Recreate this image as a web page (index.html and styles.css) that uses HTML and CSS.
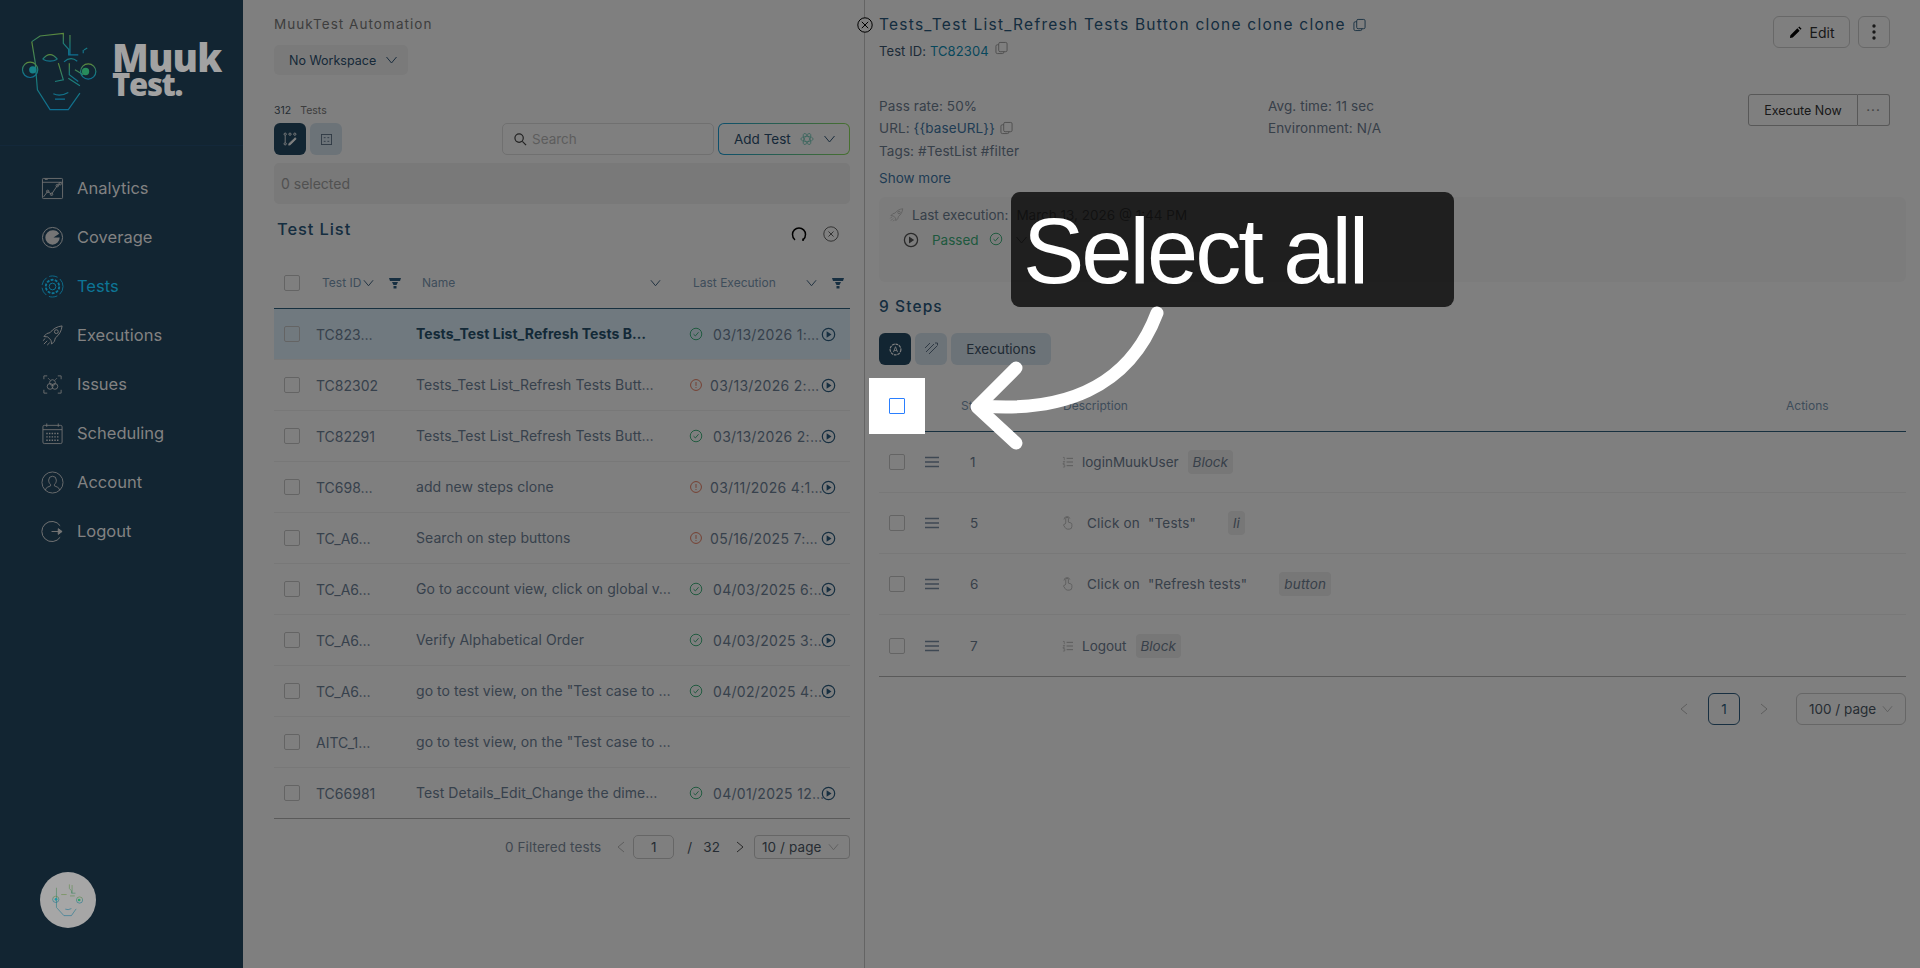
FILE: index.html
```html
<!DOCTYPE html>
<html lang="en">
<head>
<meta charset="utf-8">
<title>MuukTest</title>
<link rel="stylesheet" href="styles.css">
</head>
<body>
<svg class="defs" width="0" height="0">
  <defs>
    <linearGradient id="faceGrad" x1="0" y1="0" x2="0" y2="1">
      <stop offset="0" stop-color="#5f8a3a"/><stop offset=".5" stop-color="#1c7f7a"/><stop offset="1" stop-color="#0e6f92"/>
    </linearGradient>
    <symbol id="i-check" viewBox="0 0 16 16"><circle cx="8" cy="8" r="6.6" fill="none" stroke="currentColor" stroke-width="1.1"/><path d="M5.2 8.2 7.3 10.2 10.9 6" fill="none" stroke="currentColor" stroke-width="1.1"/></symbol>
    <symbol id="i-warn" viewBox="0 0 16 16"><circle cx="8" cy="8" r="6.2" fill="none" stroke="currentColor" stroke-width="1.1"/><path d="M8 4.6V9M8 10.4v1.1" fill="none" stroke="currentColor" stroke-width="1.1"/></symbol>
    <symbol id="i-play" viewBox="0 0 16 16"><circle cx="8" cy="8" r="6.6" fill="none" stroke="currentColor" stroke-width="1.3"/><path d="M6 4.6 11.2 8 6 11.4Z" fill="currentColor"/></symbol>
    <symbol id="i-chev" viewBox="0 0 12 8"><path d="M1 1 6 7 11 1" fill="none" stroke="currentColor" stroke-width="1"/></symbol>
    <symbol id="i-funnel" viewBox="0 0 12 12"><path d="M0 1H12L11 4H1ZM3 5H9L7.5 8H4.500ZM4.500 9H7.500V11.500H4.500Z" fill="currentColor"/></symbol>
    <symbol id="i-copy" viewBox="0 0 14 14"><rect x="4" y="1" width="9" height="10" rx="1.500" fill="none" stroke="currentColor"/><path d="M4 3.500H2.500A1.500 1.500 0 0 0 1 5V11.500A1.500 1.500 0 0 0 2.500 13H8A1.500 1.500 0 0 0 9.500 11.500V11" fill="none" stroke="currentColor"/></symbol>
    <symbol id="i-handle" viewBox="0 0 14 12"><path d="M0 1.500H14M0 6H14M0 10.500H14" stroke="currentColor" stroke-width="1.300"/></symbol>
    <symbol id="i-list" viewBox="0 0 12 12"><path d="M5 2H12M5 6H12M5 10H12" stroke="currentColor"/><path d="M1 1H2.500V4M1 5.500H3L1 8H3M1 9H3V11.500H1" fill="none" stroke="currentColor" stroke-width=".7"/></symbol>
    <symbol id="i-hand" viewBox="0 0 12 16"><path d="M4 8V3a1.500 1.500 0 0 1 3 0V7l3 1a1.500 1.500 0 0 1 1 1.500V12a3 3 0 0 1-3 3H6a3 3 0 0 1-2.500-1.500L1.500 10.500A1 1 0 0 1 3 9.500ZM2 4a3.500 3.500 0 0 1 6.800-1" fill="none" stroke="currentColor" stroke-width=".9"/></symbol>
    <symbol id="i-rocket" viewBox="0 0 24 24"><path d="M22 2C17 2.500 12.500 5 9.500 9L6 10 3 13 7 13.500 10.500 17 11 21 14 18 15 14.500C19 11.500 21.500 7 22 2ZM6.500 17.500 3 21M9 19.500 6.500 22M4.500 15 2 17.500" fill="none" stroke="currentColor"/><circle cx="16" cy="8" r="2" fill="none" stroke="currentColor"/></symbol>
  </defs>
</svg>

<div class="app">
  <aside class="sidebar">
    <div class="brand">
      <svg class="face" viewBox="60 90 240 250">
        <g fill="none" stroke="url(#faceGrad)" stroke-width="3.500">
          <path d="M95 125 120 108 190 100V130L206 148V165H235M210 105V165M252 150 262 144M250 150V160"/>
          <path d="M95 125 105 185 112 270 150 330H205L240 280"/>
          <path d="M128 178Q150 150 172 178M128 178Q150 190 172 178M192 186Q212 168 232 184"/>
          <path d="M225 210 250 225M205 235 240 258M175 190 190 240 165 245M160 282Q180 292 205 278M165 298H195"/>
          <circle cx="90" cy="210" r="23"/><circle cx="265" cy="215" r="23"/>
          <path d="M208 190V225L235 245"/>
        </g>
        <circle cx="98" cy="210" r="11" fill="#17828a"/><circle cx="257" cy="215" r="11" fill="#278c5c"/>
      </svg>
      <div class="wordmark"><span class="w-muuk">Muuk</span><span class="w-test">Test.</span></div>
    </div>
    <nav class="nav">
      <a class="nav-item"><svg class="nav-ico" viewBox="0 0 24 24" fill="none" stroke="currentColor" stroke-width=".9"><rect x="1.500" y="1.500" width="21" height="21" rx="1"/><path d="M1.500 5.500H22.500M4 2.500H7"/><path d="M2.500 21 7 15 11 18 17 9 20 7"/><circle cx="7" cy="15" r="1.300"/><circle cx="11" cy="18" r="1.300"/><circle cx="17" cy="9" r="1.300"/><circle cx="20" cy="7" r="1.300"/></svg><span>Analytics</span></a>
      <a class="nav-item"><svg class="nav-ico" viewBox="0 0 24 24"><circle cx="12" cy="12" r="10.500" fill="none" stroke="currentColor"/><path d="M12 4.500A7.500 7.500 0 1 0 19.500 12H13L19 8A7.500 7.500 0 0 0 12 4.500Z" fill="currentColor"/></svg><span>Coverage</span></a>
      <a class="nav-item is-active"><svg class="nav-ico" viewBox="0 0 24 24" fill="none" stroke="currentColor"><circle cx="12" cy="12" r="3.500"/><circle cx="12" cy="12" r="7" stroke-width="2" stroke-dasharray="3 1.400"/><circle cx="12" cy="12" r="11" stroke-width=".9" stroke-dasharray="9 3"/></svg><span>Tests</span></a>
      <a class="nav-item"><svg class="nav-ico" viewBox="0 0 24 24"><use href="#i-rocket"/></svg><span>Executions</span></a>
      <a class="nav-item"><svg class="nav-ico" viewBox="0 0 24 24" fill="none" stroke="currentColor" stroke-width=".9"><path d="M3 6.500V3H6.500M17.500 3H21V6.500M3 17.500V21H6.500M17.500 21H21V17.500"/><circle cx="9.500" cy="14" r="3"/><circle cx="14.500" cy="14" r="3"/><circle cx="12" cy="10" r="3"/><path d="M9 7 7.500 5.500M15 7 16.500 5.500"/></svg><span>Issues</span></a>
      <a class="nav-item"><svg class="nav-ico" viewBox="0 0 24 24" fill="none" stroke="currentColor" stroke-width=".9"><rect x="2" y="3.500" width="20" height="19" rx="1.500"/><path d="M2 8H22M6 1.500V5M18 1.500V5"/><path d="M5.500 12H18.500M5.500 15.500H18.500M5.500 19H18.500" stroke-width="1.500" stroke-dasharray="1.500 1.300"/></svg><span>Scheduling</span></a>
      <a class="nav-item"><svg class="nav-ico" viewBox="0 0 24 24" fill="none" stroke="currentColor" stroke-width=".9"><circle cx="12" cy="12" r="11"/><path d="M4.500 20C5 17 8 16.500 10 15.500V14C8.500 13 8 11 8 9.500A4 4 0 0 1 16 9.500C16 11 15.500 13 14 14V15.500C16 16.500 19 17 19.500 20"/></svg><span>Account</span></a>
      <a class="nav-item"><svg class="nav-ico" viewBox="0 0 24 24" fill="none" stroke="currentColor"><path d="M20 6A10.500 10.500 0 1 0 20 18"/><path d="M11 12H22"/><path d="M18 9 22 12 18 15Z" fill="currentColor"/></svg><span>Logout</span></a>
    </nav>
    <div class="avatar">
      <svg viewBox="60 90 240 250" class="avatar-face">
        <g fill="none" stroke="url(#faceGrad)" stroke-width="4">
          <path d="M95 125V270L150 330H205L240 280M190 100V130L206 148V165H235M210 105V165"/>
          <path d="M130 175H170M195 185H230M160 282Q180 292 205 278"/>
          <circle cx="90" cy="210" r="23"/><circle cx="265" cy="215" r="23"/>
        </g>
        <circle cx="92" cy="210" r="10" fill="#1b9aa6"/><circle cx="262" cy="215" r="10" fill="#2da46a"/>
      </svg>
    </div>
  </aside>

  <section class="list-panel">
    <div class="org">MuukTest Automation</div>
    <div class="workspace">No Workspace <svg class="chev chev-lg"><use href="#i-chev"/></svg></div>
    <div class="count"><span>312</span><span>Tests</span></div>
    <div class="tools">
      <button class="square is-dark"><svg viewBox="0 0 16 16" fill="none" stroke="currentColor" width="14" height="14"><circle cx="2.500" cy="2.500" r="1.300"/><circle cx="2.500" cy="13.500" r="1.300"/><circle cx="8" cy="2.500" r="1.300"/><circle cx="13.500" cy="2.500" r="1.300"/><path d="M2.500 4V12"/><path d="M7 13 14 6.500 15 8 8.500 14.500 6.500 15Z" fill="currentColor"/></svg></button>
      <button class="square is-soft"><svg viewBox="0 0 12 12" fill="none" stroke="currentColor" width="11" height="11"><rect x=".5" y=".5" width="11" height="11"/><path d="M3 4H5M3 8H5M7 4H9M7 8H9"/></svg></button>
      <div class="search"><svg viewBox="0 0 14 14" width="13" height="13" fill="none" stroke="currentColor" stroke-width="1.300"><circle cx="5.500" cy="5.500" r="4.500"/><path d="M9 9 13 13"/></svg><span>Search</span></div>
      <div class="add-test">Add Test
        <svg viewBox="0 0 16 16" width="14" height="14" fill="none" stroke="#7fd0c0" stroke-width="1"><ellipse cx="8" cy="8" rx="7" ry="3"/><ellipse cx="8" cy="8" rx="7" ry="3" transform="rotate(60 8 8)"/><ellipse cx="8" cy="8" rx="7" ry="3" transform="rotate(120 8 8)"/></svg>
        <svg class="chev chev-lg"><use href="#i-chev"/></svg></div>
    </div>
    <div class="selected">0 selected</div>
    <div class="list-head">
      <h2>Test List</h2>
      <div class="list-actions">
        <svg viewBox="0 0 16 16" width="16" height="16" fill="none" stroke="#000" stroke-width="1.500"><path d="M4 14C2 12.500 1.500 10.500 1.500 8.500A6.500 6.500 0 0 1 14.500 8.500C14.500 10.500 14 12.500 12 14"/><path d="M12 12.500V15" /></svg>
        <svg viewBox="0 0 16 16" width="16" height="16" fill="none" stroke="#666"><circle cx="8" cy="8" r="7.200"/><path d="M5.500 5.500 10.500 10.500M10.500 5.500 5.500 10.500"/></svg>
      </div>
    </div>
    <div class="t-row t-head">
      <span class="box"></span>
      <span class="cell-id">Test ID<svg class="chev"><use href="#i-chev"/></svg><svg class="funnel"><use href="#i-funnel"/></svg></span>
      <span class="cell-name">Name<svg class="chev"><use href="#i-chev"/></svg></span>
      <span class="cell-exec">Last Execution<svg class="chev"><use href="#i-chev"/></svg><svg class="funnel"><use href="#i-funnel"/></svg></span>
    </div>
    <div class="t-row is-selected"><span class="box"></span><span class="tid">TC823…</span><span class="tname">Tests_Test List_Refresh Tests B…</span><span class="texec"><svg class="st ok"><use href="#i-check"/></svg><span>03/13/2026 1:…</span><svg class="pl"><use href="#i-play"/></svg></span></div>
    <div class="t-row"><span class="box"></span><span class="tid">TC82302</span><span class="tname">Tests_Test List_Refresh Tests Butt…</span><span class="texec"><svg class="st bad"><use href="#i-warn"/></svg><span>03/13/2026 2:…</span><svg class="pl"><use href="#i-play"/></svg></span></div>
    <div class="t-row"><span class="box"></span><span class="tid">TC82291</span><span class="tname">Tests_Test List_Refresh Tests Butt…</span><span class="texec"><svg class="st ok"><use href="#i-check"/></svg><span>03/13/2026 2:…</span><svg class="pl"><use href="#i-play"/></svg></span></div>
    <div class="t-row"><span class="box"></span><span class="tid">TC698…</span><span class="tname">add new steps clone</span><span class="texec"><svg class="st bad"><use href="#i-warn"/></svg><span>03/11/2026 4:1…</span><svg class="pl"><use href="#i-play"/></svg></span></div>
    <div class="t-row"><span class="box"></span><span class="tid">TC_A6…</span><span class="tname">Search on step buttons</span><span class="texec"><svg class="st bad"><use href="#i-warn"/></svg><span>05/16/2025 7:…</span><svg class="pl"><use href="#i-play"/></svg></span></div>
    <div class="t-row"><span class="box"></span><span class="tid">TC_A6…</span><span class="tname">Go to account view, click on global v…</span><span class="texec"><svg class="st ok"><use href="#i-check"/></svg><span>04/03/2025 6:…</span><svg class="pl"><use href="#i-play"/></svg></span></div>
    <div class="t-row"><span class="box"></span><span class="tid">TC_A6…</span><span class="tname">Verify Alphabetical Order</span><span class="texec"><svg class="st ok"><use href="#i-check"/></svg><span>04/03/2025 3:…</span><svg class="pl"><use href="#i-play"/></svg></span></div>
    <div class="t-row"><span class="box"></span><span class="tid">TC_A6…</span><span class="tname">go to test view, on the "Test case to …</span><span class="texec"><svg class="st ok"><use href="#i-check"/></svg><span>04/02/2025 4:…</span><svg class="pl"><use href="#i-play"/></svg></span></div>
    <div class="t-row"><span class="box"></span><span class="tid">AITC_1…</span><span class="tname">go to test view, on the "Test case to …</span><span class="texec"></span></div>
    <div class="t-row is-last"><span class="box"></span><span class="tid">TC66981</span><span class="tname">Test Details_Edit_Change the dime…</span><span class="texec"><svg class="st ok"><use href="#i-check"/></svg><span>04/01/2025 12…</span><svg class="pl"><use href="#i-play"/></svg></span></div>
    <div class="list-foot">
      <span class="filtered">0 Filtered tests</span>
      <svg class="arrow-s is-off" viewBox="0 0 8 12"><path d="M7 1 1 6 7 11"/></svg>
      <span class="page-input">1</span>
      <i class="slash">/</i>
      <span class="total">32</span>
      <svg class="arrow-s" viewBox="0 0 8 12"><path d="M1 1 7 6 1 11"/></svg>
      <span class="page-size">10 / page<svg class="chev"><use href="#i-chev"/></svg></span>
    </div>
  </section>

  <main class="detail">
    <svg class="detail-close" viewBox="0 0 16 16" fill="none" stroke="#000"><circle cx="8" cy="8" r="7.200" fill="#fff"/><path d="M4.800 4.800 11.200 11.200M11.200 4.800 4.800 11.200"/></svg>
    <div class="detail-head">
      <div>
        <h1>Tests_Test List_Refresh Tests Button clone clone clone <svg class="copy copy-blue"><use href="#i-copy"/></svg></h1>
        <div class="test-id">Test ID: <a>TC82304</a> <svg class="copy copy-up"><use href="#i-copy"/></svg></div>
      </div>
      <div class="head-actions">
        <button class="btn btn-edit"><svg viewBox="0 0 14 14" width="13" height="13"><path d="M1 13 1.500 10 9 2.500 11.500 5 4 12.500ZM10 1.500 11 .5 13.500 3 12.500 4Z" fill="#000"/></svg>Edit</button>
        <button class="btn btn-kebab"><svg viewBox="0 0 4 16" width="4" height="16"><circle cx="2" cy="2" r="1.700"/><circle cx="2" cy="8" r="1.700"/><circle cx="2" cy="14" r="1.700"/></svg></button>
      </div>
    </div>
    <div class="stats">
      <div class="stats-grid">
        <div>Pass rate: 50%</div><div>Avg. time: 11 sec</div>
        <div>URL: <a>{{baseURL}}</a> <svg class="copy"><use href="#i-copy"/></svg></div><div>Environment: N/A</div>
        <div>Tags: #TestList #filter</div><div></div>
      </div>
      <div class="exec-group"><button class="exec-now">Execute Now</button><button class="exec-more">···</button></div>
    </div>
    <div class="show-more">Show more</div>
    <div class="last-box">
      <div class="last-line"><svg class="rocket"><use href="#i-rocket"/></svg><span>Last execution:</span><span class="last-date">March 13, 2026 @ 1:44 PM</span></div>
      <div class="last-status"><svg class="last-play"><use href="#i-play"/></svg><span class="passed">Passed</span><svg class="last-check"><use href="#i-check"/></svg><svg class="chev chev-lg"><use href="#i-chev"/></svg></div>
    </div>
    <h3>9 Steps</h3>
    <div class="tabs">
      <button class="square is-dark"><svg viewBox="0 0 14 14" width="13" height="13" fill="none" stroke="currentColor"><circle cx="7" cy="7" r="5.800" stroke-dasharray="3 .8" stroke-width="1.300"/><path d="M4.800 9.800 7 4 9.200 9.800M5.600 8H8.400" stroke-width=".9"/></svg></button>
      <button class="square is-soft"><svg viewBox="0 0 14 14" width="14" height="14" fill="none" stroke="currentColor"><path d="M1 6 6 1M2 10 10 2M5 12 13 4M11 1H13.500V3.500"/></svg></button>
      <button class="tab">Executions</button>
    </div>
    <div class="s-head">
      <span></span><span></span><span class="s-step">Step</span><span>Description</span><span>Actions</span>
    </div>
    <div class="s-row"><span class="box"></span><svg class="handle"><use href="#i-handle"/></svg><span class="num">1</span><span class="desc"><svg class="di"><use href="#i-list"/></svg>loginMuukUser<em class="chip chip-a">Block</em></span></div>
    <div class="s-row"><span class="box"></span><svg class="handle"><use href="#i-handle"/></svg><span class="num">5</span><span class="desc is-click"><svg class="di"><use href="#i-hand"/></svg>Click on&nbsp; "Tests"<em class="chip chip-b">li</em></span></div>
    <div class="s-row"><span class="box"></span><svg class="handle"><use href="#i-handle"/></svg><span class="num">6</span><span class="desc is-click"><svg class="di"><use href="#i-hand"/></svg>Click on&nbsp; "Refresh tests"<em class="chip chip-b">button</em></span></div>
    <div class="s-row is-last"><span class="box"></span><svg class="handle"><use href="#i-handle"/></svg><span class="num">7</span><span class="desc"><svg class="di"><use href="#i-list"/></svg>Logout<em class="chip chip-a">Block</em></span></div>
    <div class="steps-foot">
      <svg class="arrow-s is-off" viewBox="0 0 8 12"><path d="M7 1 1 6 7 11"/></svg>
      <span class="page-cur">1</span>
      <svg class="arrow-s is-off" viewBox="0 0 8 12"><path d="M1 1 7 6 1 11"/></svg>
      <span class="page-size page-size-l">100 / page<svg class="chev"><use href="#i-chev"/></svg></span>
    </div>
  </main>
</div>

<div class="overlay"></div>
<div class="spot"><span class="box box-blue"></span></div>
<div class="callout">Select all</div>
<svg class="pointer" viewBox="0 0 1920 968" fill="none" stroke="#fff" stroke-width="13" stroke-linecap="round" stroke-linejoin="round">
  <path d="M1157 313C1128 390 1060 412 982 406"/>
  <path d="M1016 368 977 407 1016 443"/>
</svg>
</body>
</html>
```
FILE: styles.css
```css
* { box-sizing: border-box; }
html, body { margin: 0; height: 100%; }
body { width: 1920px; height: 968px; overflow: hidden; position: relative; background: #fff; font-family: "Inter", "Liberation Sans", sans-serif; color: #7d90a6; }
.defs { position: absolute; }
h1, h2, h3 { margin: 0; font-weight: 500; }
button { font: inherit; padding: 0; border: 0; cursor: pointer; }
svg { display: block; flex: none; }

.app { display: flex; height: 968px; }

/* Sidebar sits above the dim layer with its dimmed colours */
.sidebar { width: 243px; flex: none; height: 968px; background: #122532; position: relative; z-index: 3; display: flex; flex-direction: column; color: #828282; }
.brand { height: 146px; padding: 30px 0 0 20px; display: flex; border-bottom: 1px solid #13283a; }
.face { width: 80px; height: 83px; }
.wordmark { display: flex; flex-direction: column; margin: 13px 0 0 12px; color: #a2a2a2; font-family: "Open Sans", sans-serif; font-weight: 800; }
.w-muuk { font-size: 38px; line-height: 28px; letter-spacing: -.8px; }
.w-test { font-size: 31px; line-height: 26px; letter-spacing: -1.300px; }
.nav { padding-top: 18px; display: flex; flex-direction: column; padding-left: 41px; }
.nav-item { height: 49px; display: flex; align-items: center; gap: 13px; font-size: 16.500px; }
.nav-item span { padding-bottom: 2px; }
.nav-item.is-active { color: #0d7596; }
.nav-ico { width: 23px; height: 23px; color: #757575; }
.is-active .nav-ico { color: #0d7596; }
.avatar { position: absolute; left: 40px; top: 872px; width: 56px; height: 56px; border-radius: 50%; background: #a6a6a6; display: flex; align-items: center; justify-content: center; }
.avatar-face { width: 34px; height: 34px; }

/* Test list */
.list-panel { width: 622px; flex: none; height: 968px; padding: 14px 14px 0 31px; border-right: 1px solid #c8c8c8; }
.org { height: 20px; font-size: 13.500px; line-height: 20px; letter-spacing: 1.050px; color: #7c7c7c; }
.workspace { margin-top: 11px; width: 134px; height: 30px; display: flex; align-items: center; gap: 9px; padding-left: 15px; background: #f5f5f5; border-radius: 5px; font-size: 12.500px; color: #2d5170; }
.chev { width: 12px; height: 8px; color: #33597a; }
.chev-lg { width: 13px; height: 8px; }
.count { margin-top: 27px; height: 18px; display: flex; gap: 9px; font-size: 10.500px; line-height: 18px; color: #4a5866; }
.count span:last-child { color: #7a7a7a; }
.tools { margin-top: 3px; display: flex; align-items: center; }
.square { width: 32px; height: 32px; border-radius: 6px; display: flex; align-items: center; justify-content: center; }
.is-dark { background: #244a64; color: #fff; }
.is-soft { background: #d9e6f1; color: #5f7388; margin-left: 4px; }
.search { margin-left: 160px; width: 212px; height: 32px; border: 1px solid #e0e0e0; border-radius: 5px; display: flex; align-items: center; gap: 5px; padding-left: 11px; font-size: 13.500px; color: #bbb; }
.search svg { color: #444; }
.add-test { margin-left: 4px; width: 132px; height: 32px; border: 1px solid transparent; border-radius: 6px; background: linear-gradient(#fff, #fff) padding-box, linear-gradient(90deg, #1a9fd8, #8fe060) border-box; display: flex; align-items: center; gap: 9px; padding-left: 15px; font-size: 13.500px; color: #2d5170; }
.selected { margin-top: 8px; height: 41px; padding-left: 7px; background: #f2f2f2; border-radius: 5px; font-size: 14px; line-height: 41px; color: #a3a3a3; }
.list-head { height: 46px; display: flex; justify-content: space-between; padding-top: 14px; }
h2 { font-size: 16.500px; line-height: 22px; letter-spacing: .9px; color: #2b5a80; padding-left: 3px; }
.list-actions { display: flex; gap: 16px; padding: 8px 11px 0 0; }

.t-row { height: 51px; display: grid; grid-template-columns: 42px 100px 273px 1fr; align-items: center; border-bottom: 1px solid #f0f0f0; font-size: 14px; color: #6f8399; }
.t-row .box { margin-left: 10px; }
.box { display: block; width: 16px; height: 16px; border: 1px solid #c9c9c9; border-radius: 2px; background: #fff; }
.is-selected .box { background: #e3f2fc; }
.t-head { height: 59px; border-bottom: 1px solid #2f617f; font-size: 12px; color: #7d9ab5; padding-top: 7px; grid-template-columns: 48px 100px 271px 1fr; }
.cell-id { display: flex; align-items: center; }
.cell-id .chev { margin-left: 2px; width: 11px; }
.cell-id .funnel { margin-left: 15px; }
.funnel { width: 12px; height: 12px; color: #2f5f82; }
.cell-name { display: flex; align-items: center; justify-content: space-between; padding-right: 32px; }
.cell-name .chev { width: 11px; }
.cell-exec { display: flex; align-items: center; }
.cell-exec .chev { margin-left: 30px; width: 11px; }
.cell-exec .funnel { margin-left: 15px; }
.is-selected { background: #e0f3ff; }
.tname { padding-bottom: 2px; letter-spacing: .06px; }
.is-selected .tname { font-weight: 700; color: #28536f; }
.is-last { border-bottom: 1px solid #b5b5b5; }
.texec { display: flex; align-items: center; gap: 10px; position: relative; height: 16px; letter-spacing: .3px; }
.st { width: 14px; height: 14px; }
.ok { color: #3cb27c; }
.bad { color: #e97a5c; margin-right: -3px; }
.pl { position: absolute; left: 132px; top: 1px; width: 15px; height: 15px; color: #2f5f82; }
.list-foot { margin-top: 16px; height: 24px; display: flex; align-items: center; justify-content: flex-end; font-size: 13.500px; color: #7f8ea0; letter-spacing: .1px; }
.filtered { margin-right: 16px; }
.arrow-s { width: 8px; height: 12px; fill: none; stroke: #555; }
.arrow-s.is-off { stroke: #bbb; }
.page-input { margin-left: 8px; width: 41px; height: 24px; border: 1px solid #ccc; border-radius: 5px; text-align: center; line-height: 22px; color: #4d5966; }
.slash { margin-left: 13px; color: #4d5966; font-style: normal; }
.total { margin: 0 16px 0 11px; color: #4d5966; }
.page-size { margin-left: 10px; width: 96px; height: 24px; border: 1px solid #ccc; border-radius: 4px; display: flex; align-items: center; justify-content: space-between; padding: 0 10px 0 7px; color: #4d5966; }
.page-size .chev { color: #bbb; width: 11px; }

/* Detail */
.detail { flex: 1; min-width: 0; height: 968px; padding: 14px 14px 0 14px; position: relative; }
.detail-close { position: absolute; left: -8px; top: 17px; width: 16px; height: 16px; }
.detail-head { display: flex; justify-content: space-between; height: 48px; }
h1 { font-size: 15.500px; line-height: 22px; letter-spacing: 1.250px; font-weight: 400; color: #2b5a80; display: flex; align-items: center; white-space: pre; }
.copy { width: 13px; height: 14px; color: #9a9a9a; margin-left: 5px; display: inline-block; vertical-align: middle; }
.copy-blue { color: #2f5f82; margin-left: 2px; }
.copy-up { position: relative; top: -4px; margin-left: 3px; }
.test-id { margin-top: 5px; line-height: 20px; font-size: 13px; letter-spacing: .1px; color: #3a5670; }
.test-id a { color: #0f8fb8; }
.head-actions { display: flex; gap: 8px; padding: 2px 16px 0 0; }
.btn { height: 32px; background: #fff; border: 1px solid #d0d0d0; border-radius: 6px; display: flex; align-items: center; justify-content: center; color: #333; font-size: 14px; }
.btn-edit { width: 77px; gap: 8px; }
.btn-kebab { width: 32px; }
.btn-kebab svg { fill: #333; }
.stats { margin-top: 32px; display: flex; justify-content: space-between; font-size: 13.500px; letter-spacing: .1px; color: #6f8093; }
.stats-grid { display: grid; grid-template-columns: 389px auto; grid-template-rows: 22px 22px 23px; padding-top: 1px; align-items: center; }
.stats-grid > div { display: flex; align-items: center; white-space: pre; }
.stats-grid a { color: #3f78a8; }
.exec-group { display: flex; height: 32px; margin-right: 16px; }
.exec-now { width: 110px; height: 32px; background: #fff; border: 1px solid #b0b0b0; border-radius: 3px 0 0 3px; font-size: 12.500px; color: #333; }
.exec-more { width: 32px; height: 32px; background: #fff; border: 1px solid #b0b0b0; border-left: 0; border-radius: 0 3px 3px 0; color: #888; letter-spacing: 1px; }
.show-more { margin-top: 5px; height: 22px; line-height: 22px; font-size: 13.500px; color: #3f78a8; }
.last-box { margin-top: 8px; height: 85px; background: #f9f9f9; border-radius: 6px; padding: 8px 0 0 10px; font-size: 13.500px; color: #6f8093; }
.last-line { height: 20px; display: flex; align-items: center; gap: 8px; }
.rocket { width: 15px; height: 16px; color: #aaa; }
.last-date { margin-left: 0; color: #3c3c3c; }
.last-status { margin: 5px 0 0 14px; height: 20px; display: flex; align-items: center; }
.last-play { width: 16px; height: 16px; color: #555; }
.passed { margin-left: 13px; color: #3cb27c; }
.last-check { width: 14px; height: 14px; color: #3cb27c; margin: -3px 0 0 10px; }
.last-status .chev { margin-left: 12px; color: #333; }
h3 { margin-top: 14px; height: 22px; font-size: 15.500px; line-height: 22px; letter-spacing: 1.100px; color: #2b5a80; }
.tabs { margin-top: 15px; display: flex; gap: 4px; align-items: center; }
.tabs .is-soft { margin-left: 0; }
.tab { width: 100px; height: 32px; background: #d9e6f1; border-radius: 6px; font-size: 13.500px; color: #3f5468; }
.s-head { height: 67px; padding-top: 31px; display: grid; grid-template-columns: 46px 36px 102px 1fr 120px; border-bottom: 1px solid #2f617f; font-size: 12px; line-height: 20px; color: #7d9ab5; align-content: start; }
.s-row { height: 61px; display: grid; grid-template-columns: 46px 45px 92px 1fr; align-items: center; border-bottom: 1px solid #f0f0f0; font-size: 13.500px; color: #6f8093; }
.s-row.is-last { height: 62px; border-bottom: 1px solid #b5b5b5; }
.s-row .box { margin-left: 10px; }
.handle { width: 14px; height: 12px; color: #7d90a6; }
.desc { display: flex; align-items: center; height: 24px; }
.di { width: 11px; height: 12px; color: #b0b0b0; margin-right: 9px; }
.is-click { letter-spacing: .2px; }
.is-click .di { height: 14px; margin-right: 14px; }
.chip { background: #eee; border-radius: 4px; height: 24px; line-height: 24px; padding: 0 5px; }
.chip-a { margin-left: 9px; }
.chip-b { margin-left: 32px; }
.steps-foot { margin-top: 16px; height: 32px; display: flex; align-items: center; justify-content: flex-end; font-size: 13.500px; }
.page-cur { margin: 0 20px; width: 32px; height: 32px; border: 1px solid #2f5f82; border-radius: 6px; text-align: center; line-height: 30px; color: #2f5f82; }
.page-size-l { margin-left: 28px; width: 110px; height: 32px; border-radius: 6px; padding: 0 12px; }

/* Tutorial layer */
.overlay { position: absolute; inset: 0; z-index: 2; background: rgba(0, 0, 0, .5); }
.spot { position: absolute; z-index: 4; left: 869px; top: 378px; width: 56px; height: 56px; background: #fff; display: flex; align-items: center; justify-content: center; }
.box-blue { border-color: #2a7fff; border-radius: 1px; }
.callout { position: absolute; z-index: 4; left: 1011px; top: 192px; width: 443px; height: 115px; background: rgba(15, 15, 15, .85); border-radius: 9px; padding-left: 12px; font-family: "Liberation Sans", sans-serif; font-size: 92px; line-height: 118px; color: #fff; letter-spacing: -3px; white-space: nowrap; }
.pointer { position: absolute; z-index: 5; left: 0; top: 0; width: 1920px; height: 968px; pointer-events: none; }
```
